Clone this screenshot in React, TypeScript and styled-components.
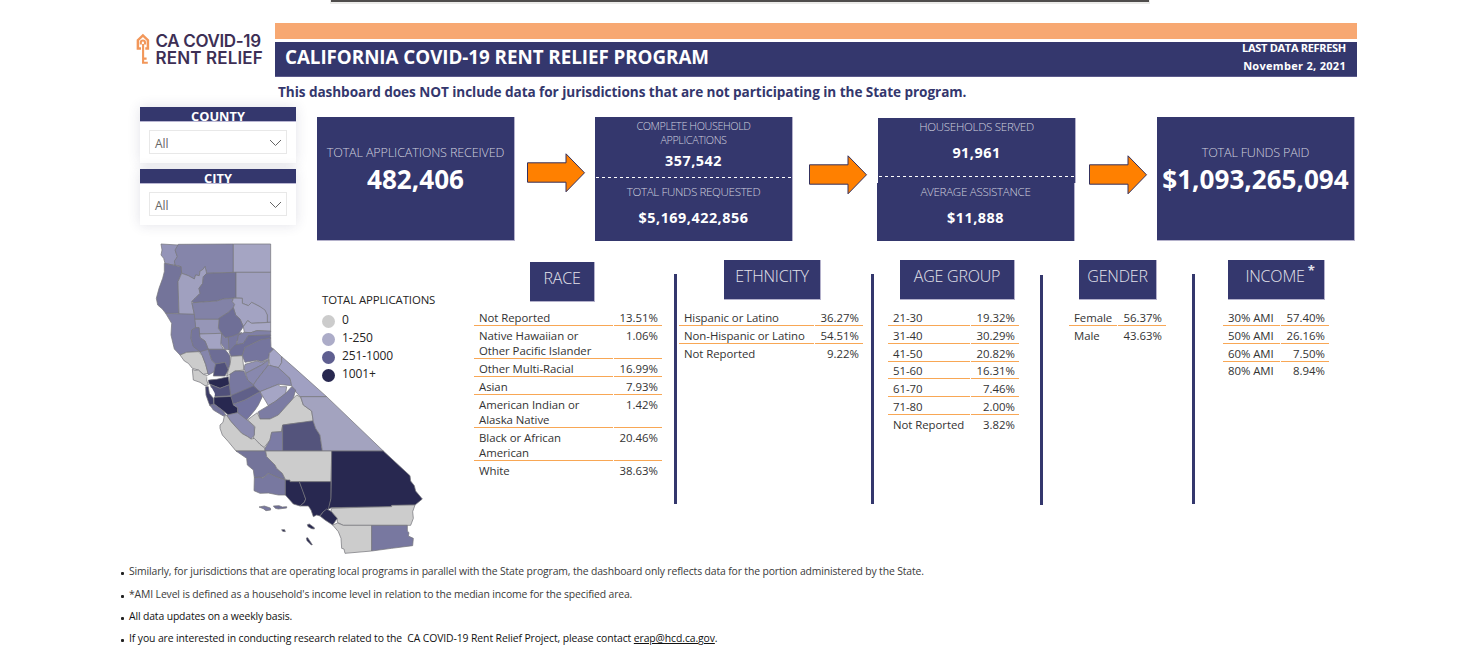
import React from 'react';
import styled, { createGlobalStyle } from 'styled-components';

const NAVY = '#34376d';

const GlobalStyle = createGlobalStyle`
  body {
    margin: 0;
    background: #fff;
    color: #333;
    font-family: 'Open Sans', 'Noto Sans', sans-serif;
  }

  * {
    box-sizing: border-box;
  }
`;

const Page = styled.main`
  width: 1481px;
  height: 664px;
  overflow: hidden;
`;

const TopEdge = styled.div`
  width: 820px;
  height: 4px;
  margin-left: 330px;
  background: #4f4d4c;
  border: solid #ebebe9;
  border-width: 0 1px 2px;
`;

const Header = styled.header`
  display: flex;
  height: 54px;
  margin: 19px 0 0 135px;
`;

const Logo = styled.div`
  display: flex;
  width: 140px;
  padding-top: 10px;

  svg {
    width: 16px;
    height: 34px;
  }
`;

const LogoText = styled.div`
  margin-left: 4.5px;
  color: #3d2f55;
  font: 600 17px/16.5px Inter, sans-serif;
  white-space: nowrap;
`;

const LogoLine = styled.div<{ $spacing: number }>`
  letter-spacing: ${p => p.$spacing}px;
`;

const Banner = styled.div`
  width: 1082px;
`;

const OrangeBar = styled.div`
  height: 16px;
  margin-bottom: 3px;
  background: #f7a872;
`;

const TitleBar = styled.div`
  display: flex;
  justify-content: space-between;
  height: 35px;
  padding: 0 11px 0 10px;
  background: ${NAVY};
  border-bottom: 1px solid #5b5a8b;
  color: #fff;
`;

const Title = styled.h1`
  margin: 0;
  font-size: 18.8px;
  font-weight: 700;
  line-height: 30px;
  letter-spacing: -0.04px;
  white-space: nowrap;
`;

const Refresh = styled.div`
  margin-top: -3px;
  font-size: 11px;
  font-weight: 700;
  line-height: 18px;
  text-align: right;
  white-space: nowrap;
`;

const RefreshLine = styled.div<{ $spacing: number }>`
  letter-spacing: ${p => p.$spacing}px;
`;

const Summary = styled.section`
  display: flex;
  height: 164px;
`;

const Filters = styled.div`
  width: 156px;
  margin-left: 140px;
  padding-top: 30px;
`;

const FilterCard = styled.div`
  height: 56px;
  margin-bottom: 6px;
  background: #fff;
  box-shadow: 0 0 12px rgba(50, 50, 90, 0.14);
`;

const FilterTitle = styled.div`
  height: 15px;
  overflow: hidden;
  background: ${NAVY};
  border-bottom: 1px solid #b9b6d2;
  color: #fff;
  font-size: 12.8px;
  font-weight: 700;
  line-height: 19px;
  text-align: center;
`;

const Select = styled.div`
  display: flex;
  align-items: center;
  justify-content: space-between;
  width: 138px;
  height: 24px;
  margin: 8px 0 0 9px;
  padding: 3px 4px 0 5px;
  border: 1px solid #e8e8e8;
  color: #666;
  font-size: 12px;

  svg {
    width: 13px;
    height: 8px;
    margin-bottom: 2px;
  }
`;

const SummaryMain = styled.div`
  flex: 1;
`;

const Notice = styled.p`
  height: 40px;
  margin: 0 0 0 -18px;
  color: ${NAVY};
  font-size: 13.6px;
  font-weight: 700;
  line-height: 30px;
  letter-spacing: -0.07px;
  white-space: nowrap;
`;

const KpiRow = styled.div`
  display: flex;
  margin-left: 21px;
`;

const Card = styled.div`
  width: 198px;
  height: 124px;
  background: ${NAVY};
  border: solid #b4b1cb;
  border-width: 0 1px 1px 0;
  color: #fff;
  text-align: center;
  white-space: nowrap;
`;

const CardLabel = styled.div<{ $top: number; $size?: number; $spacing?: number }>`
  padding-top: ${p => p.$top}px;
  color: #d0d1df;
  font-size: ${p => p.$size || 11.6}px;
  font-weight: 300;
  line-height: 14px;
  letter-spacing: ${p => p.$spacing || -0.3}px;
`;

const BigValue = styled.div`
  margin: 2px -4px 0;
  font-size: 26.1px;
  font-weight: 700;
  line-height: 34px;
`;

const Value = styled.div<{ $top: number }>`
  margin-top: ${p => p.$top}px;
  font-size: 14.4px;
  font-weight: 700;
  line-height: 18px;
  letter-spacing: 0.5px;
`;

const SplitCard = styled.div<{ $shift?: boolean }>`
  width: 198px;
  height: 124px;
  padding-top: ${p => (p.$shift ? 1 : 0)}px;
  color: #fff;
  text-align: center;
  white-space: nowrap;
`;

const Half = styled.div<{ $height: number; $left?: number }>`
  width: 198px;
  height: ${p => p.$height}px;
  margin-left: ${p => p.$left || 0}px;
  background: ${NAVY};
  border-right: 1px solid #b4b1cb;
`;

const Dashes = styled.div`
  height: 1px;
  margin-left: 1px;
  background: repeating-linear-gradient(90deg, #fff 0 3px, transparent 3px 6px);
`;

const Arrow = styled.svg<{ $top: number; $left: number; $right: number }>`
  width: 59px;
  height: 42px;
  margin: ${p => p.$top}px ${p => p.$right}px 0 ${p => p.$left}px;
`;

const Details = styled.section`
  display: flex;
  height: 319px;
`;

const MapPanel = styled.div`
  display: grid;
  width: 329px;
  margin-left: 145px;

  > * {
    grid-area: 1 / 1;
  }
`;

const Map = styled.svg`
  width: 290px;
  height: 325px;
  margin-top: -6px;
`;

const Legend = styled.div`
  margin: 50px 0 0 177px;
  color: #252423;
  font-size: 11.4px;
  line-height: 18px;
  letter-spacing: -0.1px;
  white-space: nowrap;
`;

const LegendItem = styled.div<{ $color: string }>`
  display: flex;
  align-items: center;
  height: 18px;
  font-size: 12px;

  &:first-child {
    margin-top: 2px;
  }

  &::before {
    content: '';
    width: 13px;
    height: 13px;
    margin: 2px 7px 0 0;
    border-radius: 50%;
    background: ${p => p.$color};
  }
`;

const Divider = styled.div<{ $top?: number; $left: number; $right: number }>`
  width: 3px;
  height: 230px;
  margin: ${p => p.$top || 33}px ${p => p.$right}px 0 ${p => p.$left}px;
  background: ${NAVY};
`;

const Group = styled.div<{ $width: number }>`
  width: ${p => p.$width}px;
`;

const GroupTitle = styled.h2<{ $width: number; $left: number; $top?: number; $indent?: number }>`
  display: flex;
  justify-content: center;
  width: ${p => p.$width}px;
  height: 40px;
  margin: ${p => p.$top || 19}px 0 0 ${p => p.$left}px;
  padding-left: ${p => p.$indent || 0}px;
  background: ${NAVY};
  border: solid #b4b1cb;
  border-width: 0 1px 1px 0;
  color: #e4e4ec;
  font-size: 16px;
  font-weight: 300;
  line-height: 33px;
  letter-spacing: -0.2px;
  white-space: nowrap;

  sup {
    margin: -6px 0 0 3px;
    font-size: 13px;
    font-weight: 700;
  }
`;

const Rows = styled.div<{ $top?: number; $columns: string }>`
  display: grid;
  grid-template-columns: ${p => p.$columns};
  column-gap: 1px;
  margin-top: ${p => p.$top || 8}px;
`;

const Cell = styled.div<{ $last: boolean; $value?: boolean; $tight?: boolean }>`
  padding: ${p => (p.$tight ? 1.85 : 2)}px 4px 0 5px;
  border-bottom: 1px solid ${p => (p.$last ? 'transparent' : '#f8a755')};
  font-size: 11.4px;
  line-height: 15px;
  letter-spacing: ${p => (p.$value ? 0 : -0.05)}px;
  text-align: ${p => (p.$value ? 'right' : 'left')};
  white-space: pre;
`;

const Notes = styled.ul`
  margin: 0 0 0 121px;
  padding: 0;
  list-style: none;
`;

const Note = styled.li<{ $dark?: boolean; $spacing?: number }>`
  display: flex;
  align-items: center;
  height: 22.4px;
  color: ${p => (p.$dark ? '#111' : '#3a3a3a')};
  font-size: 10.4px;
  letter-spacing: ${p => p.$spacing || -0.13}px;
  white-space: pre;

  &::before {
    content: '';
    width: 3px;
    height: 3px;
    margin: 5px 5px 0 0;
    border-radius: 1px;
    background: #222;
  }
`;

const Email = styled.a`
  color: inherit;
  text-decoration: underline;
`;

type Row = [string, string];

const race: Row[] = [
  ['Not Reported', '13.51%'],
  ['Native Hawaiian or\nOther Pacific Islander', '1.06%'],
  ['Other Multi-Racial', '16.99%'],
  ['Asian', '7.93%'],
  ['American Indian or\nAlaska Native', '1.42%'],
  ['Black or African\nAmerican', '20.46%'],
  ['White', '38.63%'],
];

const ethnicity: Row[] = [
  ['Hispanic or Latino', '36.27%'],
  ['Non-Hispanic or Latino', '54.51%'],
  ['Not Reported', '9.22%'],
];

const age: Row[] = [
  ['21-30', '19.32%'],
  ['31-40', '30.29%'],
  ['41-50', '20.82%'],
  ['51-60', '16.31%'],
  ['61-70', '7.46%'],
  ['71-80', '2.00%'],
  ['Not Reported', '3.82%'],
];

const gender: Row[] = [
  ['Female', '56.37%'],
  ['Male', '43.63%'],
];

const income: Row[] = [
  ['30% AMI', '57.40%'],
  ['50% AMI', '26.16%'],
  ['60% AMI', '7.50%'],
  ['80% AMI', '8.94%'],
];

// [fill, outline] for every county, north to south
const counties: [string, string][] = [
  ['#9494b8', '48,27 100,30 92,50 97,65 88,85 92,92 60,85 56,70 48,60 51,45'],
  ['#8585aa', '100,28 265,27 265,112 185,115 180,95 172,105 165,108 163,122 152,120 148,132 130,122 110,115 108,95 90,90 88,78 97,65 90,45'],
  ['#a5a5c3', '265,27 377,27 377,112 265,112'],
  ['#74749a', '58,85 92,92 108,95 110,115 99,140 102,235 62,235 52,222 38,210 34,190 42,160 53,130 58,110'],
  ['#a0a0bf', '110,115 130,122 148,132 152,120 163,122 165,108 172,105 180,95 185,115 175,125 173,145 162,160 165,175 150,190 140,200 148,238 102,238 99,140'],
  ['#74749a', '185,115 273,112 273,188 235,192 215,198 145,203 140,200 150,190 165,175 162,160 173,145 175,125'],
  ['#9f9fbe', '273,112 377,112 377,262 367,262 367,240 345,215 320,202 310,212 292,205 292,190 273,188'],
  ['#8282a7', '145,203 215,198 235,192 265,190 262,200 269,208 265,218 250,232 222,250 222,253 148,253 148,238 141,205'],
  ['#a3a3c2', '265,190 292,190 292,205 310,212 320,202 345,215 360,225 367,240 367,262 320,265 308,257 295,275 285,252 272,240 265,218 269,208 262,200'],
  ['#6f6f97', '265,218 272,240 285,252 295,275 280,298 260,305 240,308 230,295 220,280 222,250 250,232'],
  ['#9696b7', '148,253 222,253 220,280 230,295 162,297 162,278 152,278'],
  ['#a3a3c3', '162,297 230,295 228,330 236,343 190,343 180,318 165,308'],
  ['#7f7fa5', '62,235 148,238 152,278 140,285 138,310 145,333 165,350 125,352 105,360 88,342 78,300 80,265'],
  ['#75759c', '140,285 152,278 162,278 165,308 180,318 190,343 185,362 165,350 145,335 138,310'],
  ['#cccccc', '105,360 125,352 160,350 172,362 182,388 190,415 175,418 160,405 142,400 130,385 118,378'],
  ['#8686ac', '165,350 190,343 200,375 212,387 208,410 190,420 182,388 172,362'],
  ['#cccccc', '142,403 150,406 160,405 175,418 188,422 185,435 190,450 180,452 165,442 145,435'],
  ['#6d6d95', '190,343 240,343 255,362 255,390 248,405 240,382 212,387 200,375'],
  ['#50507a', '212,387 240,382 250,405 240,423 205,423 208,405'],
  ['#8080a5', '230,295 240,308 250,306 252,345 240,343 228,325'],
  ['#7878a0', '250,306 262,304 290,292 275,320 275,333 262,350 252,345'],
  ['#a8a8c6', '295,275 308,257 320,265 377,262 377,290 335,287 318,293 298,292'],
  ['#8080a6', '298,292 318,293 335,287 377,288 377,301 310,302 295,325 275,330 280,300'],
  ['#6f6f98', '310,302 377,300 377,310 345,315 300,337 292,362 258,364 252,350 270,330 295,325'],
  ['#75759e', '300,337 345,315 377,308 378,337 386,342 373,355 371,370 350,380 335,376 300,382 292,362'],
  ['#cccccc', '258,364 292,362 297,405 270,408 255,418 245,423 250,405 256,385'],
  ['#9090b4', '300,388 335,378 350,382 371,373 350,390 302,415 297,400'],
  ['#a5a5c6', '386,342 410,365 410,383 402,398 375,392 371,370 373,355'],
  ['#8888ae', '302,415 350,390 371,375 370,390 335,435 325,450 308,435'],
  ['#8a8ab0', '370,390 400,398 435,430 440,452 400,448 345,470 330,460 325,450 335,435'],
  ['#a0a0c2', '410,365 450,400 545,485 465,485 448,465 440,452 435,430 400,398 410,383'],
  ['#7878a0', '255,418 270,408 297,408 308,435 325,450 335,462 265,483 255,478 253,447'],
  ['#282850', '190,435 215,433 250,425 253,449 225,460 200,450 192,446'],
  ['#50507a', '195,448 225,460 253,449 257,482 210,485'],
  ['#3b3b66', '182,455 190,455 193,475 205,490 207,512 195,513 190,500 183,480'],
  ['#282850', '207,487 262,484 265,510 278,518 278,533 250,540 235,528 207,507'],
  ['#73739b', '195,510 207,507 235,528 242,540 235,543 205,525'],
  ['#606089', '257,482 325,453 345,470 300,495 265,508'],
  ['#7474a0', '265,508 300,495 345,470 352,485 340,510 330,525 305,555 278,535 278,518'],
  ['#a5a5c5', '345,470 400,448 405,455 425,455 422,475 390,500 370,512 360,495'],
  ['#7c7ca3', '370,512 390,500 422,475 440,455 452,465 445,490 400,540 375,552 345,552 340,530'],
  ['#cccccc', '308,555 320,545 337,533 345,552 375,552 400,540 445,490 455,480 467,487 475,510 500,528 505,560 450,565 413,570 410,590 380,592 375,615 357,638 325,612 330,575'],
  ['#8c8cb0', '245,540 278,533 310,558 328,575 328,600 318,612 308,605 290,595 258,560'],
  ['#cccccc', '238,543 245,541 258,560 290,595 308,605 318,612 328,610 345,628 360,640 360,648 273,648 250,620 232,600 225,580 225,570 234,562'],
  ['#7c7ca5', '360,640 375,615 380,592 410,590 413,570 413,648 360,648'],
  ['#54547c', '413,570 450,565 505,557 512,580 525,600 532,648 413,648'],
  ['#a3a3bf', '467,485 545,485 715,648 532,648 525,600 512,580 505,560 500,528 475,510'],
  ['#74749a', '273,648 362,648 365,665 390,690 395,700 412,715 421,735 400,728 370,715 353,728 328,728 325,705 307,690 305,670'],
  ['#cccccc', '362,648 560,648 558,740 435,740 421,733 412,715 395,700 390,690 365,665'],
  ['#7878a0', '328,728 345,726 353,730 370,715 400,728 421,735 421,780 400,780 370,774 345,775 327,767'],
  ['#282850', '421,735 435,735 435,740 463,740 475,770 482,792 478,802 465,813 445,807 421,780'],
  ['#282850', '463,740 558,740 558,790 552,822 535,830 525,843 515,840 505,845 498,825 490,813 465,813 478,802 482,792'],
  ['#282850', '560,648 715,648 795,722 797,738 808,752 812,768 832,792 810,810 740,812 740,815 560,818 550,822 558,790'],
  ['#282850', '535,830 545,822 560,830 577,850 563,870 540,855 525,843'],
  ['#cccccc', '560,820 615,818 740,815 740,811 810,810 803,830 805,850 797,871 595,871 577,862 577,850 558,828'],
  ['#cccccc', '563,870 578,864 595,871 680,871 680,948 600,955 597,942 590,940 588,910 580,890'],
  ['#7878a0', '680,871 787,871 787,888 792,893 790,903 805,910 803,932 740,940 680,948'],
  ['#7878a0', '342,816 358,813 376,819 377,825 363,827 355,821'],
  ['#6c6c94', '385,813 402,812 412,816 425,815 425,819 400,822 391,820'],
  ['#282850', '410,884 419,884 421,890 413,889'],
  ['#282850', '487,869 493,867 508,878 508,882 500,881 489,875'],
  ['#282850', '484,909 488,908 502,929 499,930 486,917'],
];

const DataRows = ({ rows, columns, top, tight }: { rows: Row[]; columns: string; top?: number; tight?: boolean }) => (
  <Rows $columns={columns} $top={top}>
    {rows.map(([label, value], i) => (
      <React.Fragment key={label}>
        <Cell $last={i === rows.length - 1} $tight={tight}>
          {label}
        </Cell>
        <Cell $last={i === rows.length - 1} $tight={tight} $value>
          {value}
        </Cell>
      </React.Fragment>
    ))}
  </Rows>
);

const FlowArrow = ({ top, left, right }: { top: number; left: number; right: number }) => (
  <Arrow $top={top} $left={left} $right={right} viewBox='0 0 59 42'>
    <path d='M.5 10.8H39V1.8L57.5 20.8 39 39.8V30.2H.5Z' fill='#ff8000' stroke='#34315e' />
  </Arrow>
);

const Filter = ({ title }: { title: string }) => (
  <FilterCard>
    <FilterTitle>{title}</FilterTitle>
    <Select>
      All
      <svg viewBox='0 0 13 8'>
        <path d='M1 1l5.5 5.5L12 1' fill='none' stroke='#666' />
      </svg>
    </Select>
  </FilterCard>
);

export default function App() {
  return (
    <Page>
      <GlobalStyle />
      <TopEdge />
      <Header>
        <Logo>
          <svg viewBox='0 0 16 34' fill='none' stroke='#f2975a' strokeWidth='2.5'>
            <path d='M6 15.4H2.9V7.2L7.9 2.4l5 4.8v8.2h-2.6' />
            <path d='M5.8 11.5V9.6a2.1 2.1 0 0 1 4.2 0v1.9M8.1 11v19.4M8 25.6h3.6M7 29.8h5.8' strokeWidth='2.1' />
          </svg>
          <LogoText>
            <LogoLine $spacing={-0.35}>CA COVID-19</LogoLine>
            <LogoLine $spacing={0.15}>RENT RELIEF</LogoLine>
          </LogoText>
        </Logo>
        <Banner>
          <OrangeBar />
          <TitleBar>
            <Title>CALIFORNIA COVID-19 RENT RELIEF PROGRAM</Title>
            <Refresh>
              <RefreshLine $spacing={-0.3}>LAST DATA REFRESH</RefreshLine>
              <RefreshLine $spacing={0.3}>November 2, 2021</RefreshLine>
            </Refresh>
          </TitleBar>
        </Banner>
      </Header>
      <Summary>
        <Filters>
          <Filter title='COUNTY' />
          <Filter title='CITY' />
        </Filters>
        <SummaryMain>
          <Notice>
            This dashboard does NOT include data for jurisdictions that are not participating in the State program.
          </Notice>
          <KpiRow>
            <Card>
              <CardLabel $top={29} $size={12.6} $spacing={-0.15}>TOTAL APPLICATIONS RECEIVED</CardLabel>
              <BigValue>482,406</BigValue>
            </Card>
            <FlowArrow top={35} left={12} right={9} />
            <SplitCard>
              <Half $height={60}>
                <CardLabel $top={2} $size={10.8} $spacing={-0.4}>
                  COMPLETE HOUSEHOLD
                  <br />
                  APPLICATIONS
                </CardLabel>
                <Value $top={5}>357,542</Value>
              </Half>
              <Half $height={64}>
                <Dashes />
                <CardLabel $top={7} $spacing={-0.35}>TOTAL FUNDS REQUESTED</CardLabel>
                <Value $top={10}>$5,169,422,856</Value>
              </Half>
            </SplitCard>
            <FlowArrow top={37} left={16} right={10} />
            <SplitCard $shift>
              <Half $height={58}>
                <CardLabel $top={2}>HOUSEHOLDS SERVED</CardLabel>
                <Value $top={10}>91,961</Value>
              </Half>
              <Half $height={7}>
                <Dashes />
              </Half>
              <Half $height={58} $left={-1}>
                <CardLabel $top={2}>AVERAGE ASSISTANCE</CardLabel>
                <Value $top={10}>$11,888</Value>
              </Half>
            </SplitCard>
            <FlowArrow top={37} left={13} right={9} />
            <Card>
              <CardLabel $top={29} $size={12.6} $spacing={-0.2}>TOTAL FUNDS PAID</CardLabel>
              <BigValue>$1,093,265,094</BigValue>
            </Card>
          </KpiRow>
        </SummaryMain>
      </Summary>
      <Details>
        <MapPanel>
          <Map viewBox='0 0 870 975'>
            {counties.map(([fill, points]) => (
              <polygon key={points} points={points} fill={fill} stroke='#77777d' strokeWidth='2.2' strokeLinejoin='round' />
            ))}
            <path d='M186 423l9-1 3 10-10 2zM191 455l10 5 8 14 1 8-10-3z' fill='#fff' />
          </Map>
          <Legend>
            TOTAL APPLICATIONS
            <LegendItem $color='#cccccc'>0</LegendItem>
            <LegendItem $color='#acacc8'>1-250</LegendItem>
            <LegendItem $color='#5f5f90'>251-1000</LegendItem>
            <LegendItem $color='#282850'>1001+</LegendItem>
          </Legend>
        </MapPanel>
        <Group $width={188}>
          <GroupTitle $width={65} $left={56} $top={21}>RACE</GroupTitle>
          <DataRows rows={race} columns='139px 48px' top={6} />
        </Group>
        <Divider $left={12} $right={2} />
        <Group $width={184}>
          <GroupTitle $width={97} $left={45}>ETHNICITY</GroupTitle>
          <DataRows rows={ethnicity} columns='135px 48px' />
        </Group>
        <Divider $left={8} $right={14} />
        <Group $width={131}>
          <GroupTitle $width={115} $left={12}>AGE GROUP</GroupTitle>
          <DataRows rows={age} columns='82px 48px' tight />
        </Group>
        <Divider $left={21} $right={26} $top={34} />
        <Group $width={97}>
          <GroupTitle $width={78} $left={10}>GENDER</GroupTitle>
          <DataRows rows={gender} columns='48px 48px' />
        </Group>
        <Divider $left={26} $right={28} />
        <Group $width={106}>
          <GroupTitle $width={97} $left={5} $indent={8}>
            INCOME<sup>*</sup>
          </GroupTitle>
          <DataRows rows={income} columns='57px 48px' tight />
        </Group>
      </Details>
      <Notes>
        <Note>
          Similarly, for jurisdictions that are operating local programs in parallel with the State program, the dashboard only reflects data for the portion administered by the State.
        </Note>
        <Note>*AMI Level is defined as a household's income level in relation to the median income for the specified area.</Note>
        <Note $dark>All data updates on a weekly basis.</Note>
        <Note $dark $spacing={-0.1}>
          {'If you are interested in conducting research related to the  CA COVID-19 Rent Relief Project, please contact '}
          <Email>erap@hcd.ca.gov</Email>.
        </Note>
      </Notes>
    </Page>
  );
}
